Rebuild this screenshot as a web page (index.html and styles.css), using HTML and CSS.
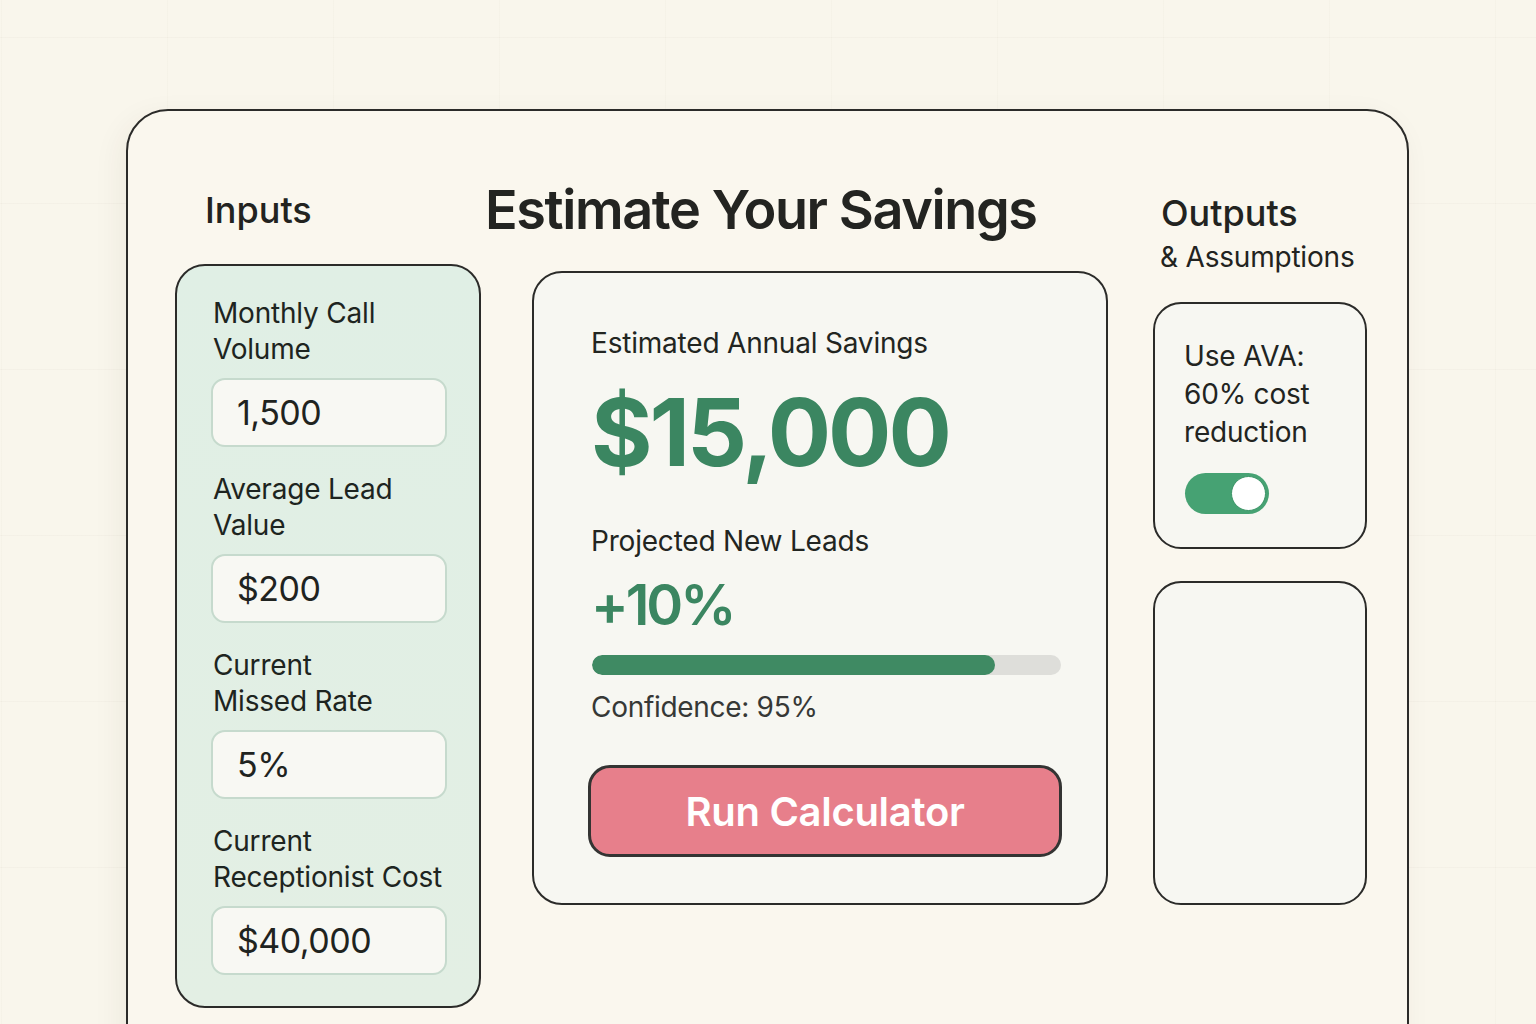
FILE: index.html
```html
<!DOCTYPE html>
<html lang="en">
<head>
<meta charset="utf-8">
<title>Estimate Your Savings</title>
<link rel="stylesheet" href="styles.css">
</head>
<body>
<div class="page">
  <div class="frame">
    <section class="col col-inputs">
      <h2 class="col-head">Inputs</h2>
      <div class="inputs-panel">
        <div class="field">
          <div class="label">Monthly Call<br>Volume</div>
          <div class="box">1,500</div>
        </div>
        <div class="field">
          <div class="label">Average Lead<br>Value</div>
          <div class="box">$200</div>
        </div>
        <div class="field">
          <div class="label">Current<br>Missed Rate</div>
          <div class="box">5%</div>
        </div>
        <div class="field">
          <div class="label">Current<br>Receptionist Cost</div>
          <div class="box">$40,000</div>
        </div>
      </div>
    </section>

    <section class="col col-main">
      <h1 class="title">Estimate Your Savings</h1>
      <div class="result-card">
        <div class="result-label">Estimated Annual Savings</div>
        <div class="big-value">$15,000</div>
        <div class="result-label leads-label">Projected New Leads</div>
        <div class="mid-value">+10%</div>
        <div class="progress"><div class="progress-fill" style="width: 86%"></div></div>
        <div class="confidence">Confidence: 95%</div>
        <button class="run-btn">Run Calculator</button>
      </div>
    </section>

    <section class="col col-outputs">
      <div class="out-head">
        <h2 class="out-title">Outputs</h2>
        <div class="out-sub">&amp; Assumptions</div>
      </div>
      <div class="side-card side-card-top">
        <div class="side-text">Use AVA:<br>60% cost<br>reduction</div>
        <div class="toggle"><div class="knob"></div></div>
      </div>
      <div class="side-card side-card-bottom"></div>
    </section>
  </div>
</div>
</body>
</html>
```

FILE: styles.css
```css
* { box-sizing: border-box; }

html, body {
  margin: 0;
  padding: 0;
  width: 1536px;
  height: 1024px;
  overflow: hidden;
}

body {
  font-family: Inter, "Noto Sans", "Liberation Sans", sans-serif;
  color: #1f2421;
  background-color: #f9f6ec;
  background-image:
    linear-gradient(to bottom, rgba(120, 110, 80, 0.035) 1px, transparent 1px),
    linear-gradient(to right, rgba(120, 110, 80, 0.025) 1px, transparent 1px);
  background-size: 166px 166px;
  background-position: 1px 37px;
}

.page {
  padding: 109px 0 0 126px;
}

.frame {
  width: 1283px;
  height: 1000px;
  border: 2px solid #2b2b29;
  border-radius: 42px;
  background: #faf7ee;
  box-shadow: -6px 8px 30px rgba(60, 50, 20, 0.06);
  display: grid;
  grid-template-columns: 306px 576px 214px;
  column-gap: 51px;
  padding: 0 40px 0 47px;
}

.col-main { margin-right: -6px; }
.col-outputs { margin-left: -6px; }

.col {
  display: flex;
  flex-direction: column;
  align-items: flex-start;
}

.col-head {
  margin: 0;
  padding: 77px 0 0 30px;
  font-size: 36px;
  line-height: 44px;
  font-weight: 500;
  color: #222320;
}

.inputs-panel {
  margin-top: 32px;
  width: 306px;
  border: 2px solid #2b2b29;
  border-radius: 30px;
  background: linear-gradient(to bottom, #e0efe5, #e3efe4);
  padding: 29px 32px 31px 34px;
}

.field + .field { margin-top: 24px; }

.label {
  padding-left: 2px;
  font-size: 28px;
  line-height: 36px;
  white-space: nowrap;
  color: #1d2420;
  letter-spacing: -0.2px;
}

.box {
  margin-top: 11px;
  width: 236px;
  height: 69px;
  border: 2px solid #c6dacd;
  border-radius: 14px;
  background: #f8f8f3;
  padding-left: 24px;
  display: flex;
  align-items: center;
  font-size: 34px;
  color: #1f2320;
  letter-spacing: -0.5px;
}

.title {
  margin: 0 0 0 -47px;
  padding-top: 67px;
  font-size: 54px;
  line-height: 64px;
  font-weight: 600;
  color: #232421;
  white-space: nowrap;
  letter-spacing: -1.4px;
}

.result-card {
  margin-top: 29px;
  width: 576px;
  height: 634px;
  border: 2px solid #2b2b29;
  border-radius: 30px;
  background: #f7f7f2;
  padding: 52px 44px 0 57px;
}

.result-label {
  font-size: 28px;
  line-height: 36px;
  color: #222521;
  letter-spacing: -0.2px;
}

.big-value {
  margin-top: 23px;
  font-size: 94px;
  line-height: 96px;
  font-weight: 700;
  color: #3b8661;
  letter-spacing: -3px;
}

.leads-label { margin-top: 43px; }

.mid-value {
  margin-top: 16px;
  font-size: 56px;
  line-height: 60px;
  font-weight: 600;
  color: #3b8661;
  letter-spacing: -3px;
}

.progress {
  margin-top: 20px;
  margin-left: 1px;
  width: 469px;
  height: 20px;
  border-radius: 10px;
  background: #dededa;
  overflow: hidden;
}

.progress-fill {
  height: 100%;
  border-radius: 10px;
  background: #3f8a63;
}

.confidence {
  margin-top: 14px;
  font-size: 28px;
  line-height: 36px;
  color: #363836;
  letter-spacing: -0.3px;
}

.run-btn {
  margin-top: 40px;
  margin-left: -3px;
  width: 474px;
  height: 92px;
  border: 3px solid #343433;
  border-radius: 22px;
  background: #e77f8b;
  color: #ffffff;
  font-family: inherit;
  font-size: 40px;
  font-weight: 600;
  letter-spacing: -0.3px;
  cursor: pointer;
}

.out-head {
  padding: 80px 0 0 8px;
}

.out-title {
  margin: 0;
  font-size: 36px;
  line-height: 44px;
  font-weight: 500;
  color: #222320;
}

.out-sub {
  margin-top: 4px;
  margin-left: -1px;
  font-size: 28px;
  line-height: 36px;
  color: #222320;
  letter-spacing: -0.2px;
}

.side-card {
  width: 214px;
  border: 2px solid #2b2b29;
  border-radius: 28px;
  background: #f7f7f2;
}

.side-card-top {
  margin-top: 27px;
  height: 247px;
  padding: 33px 0 0 29px;
}

.side-card-bottom {
  margin-top: 32px;
  height: 324px;
}

.side-text {
  font-size: 28px;
  line-height: 38px;
  color: #222421;
  letter-spacing: -0.2px;
}

.toggle {
  margin-top: 22px;
  margin-left: 1px;
  width: 84px;
  height: 41px;
  border-radius: 21px;
  background: #46a273;
  display: flex;
  align-items: center;
  justify-content: flex-end;
  padding-right: 3px;
}

.knob {
  width: 35px;
  height: 35px;
  border-radius: 50%;
  background: #ffffff;
  border: 1px solid #3b9466;
}
```
